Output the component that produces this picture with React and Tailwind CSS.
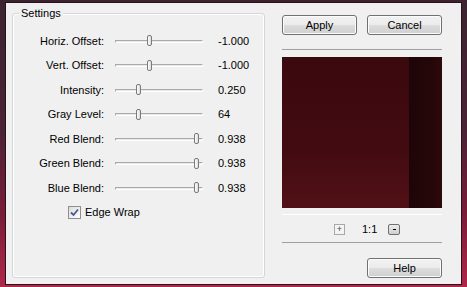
import React from "react";

const rows = [
  { label: "Horiz. Offset:", value: "-1.000", pos: 34 },
  { label: "Vert. Offset:", value: "-1.000", pos: 34 },
  { label: "Intensity:", value: "0.250", pos: 23 },
  { label: "Gray Level:", value: "64", pos: 23 },
  { label: "Red Blend:", value: "0.938", pos: 81 },
  { label: "Green Blend:", value: "0.938", pos: 81 },
  { label: "Blue Blend:", value: "0.938", pos: 81 },
];

function Slider({ pos }) {
  return (
    <div className="relative w-[88px] h-[12px] flex items-center">
      <div className="w-full h-[3px] border-t border-l border-[#a9a9a9] border-b border-b-white border-r border-r-white bg-[#e8e8e8]" />
      <div
        className="absolute top-[0px] w-[5px] h-[11px] rounded-[2px] border border-[#7a7a7a] bg-[linear-gradient(90deg,#fdfdfd,#dcdcdc)]"
        style={{ left: pos - 2 }}
      />
    </div>
  );
}

function Button({ children, className = "" }) {
  return (
    <div
      className={
        "h-[20px] w-[75px] rounded-[3px] border border-[#707070] bg-[linear-gradient(180deg,#f2f2f2_0%,#ebebeb_50%,#dddddd_51%,#cfcfcf_100%)] shadow-[inset_0_0_0_1px_#fcfcfc] flex items-center justify-center text-[11px] text-black " +
        className
      }
    >
      {children}
    </div>
  );
}

export default function App() {
  return (
    <div
      className="w-[467px] h-[287px] pl-[6px] pr-[6px] pt-[3px] pb-[3px] bg-[linear-gradient(180deg,#3b2430_0%,#4a2236_45%,#7a1c38_75%,#b0274a_100%)]"
      style={{ fontFamily: '"Liberation Sans", Arial, sans-serif' }}
    >
      <div className="w-[455px] h-[281px] bg-[#f0f0f0] flex text-[11px] text-black leading-[13px] shadow-[0_0_0_1px_#2a1018]">
        {/* Settings group */}
        <div className="relative ml-[6px] mt-[10px] w-[253px] h-[265px] rounded-[3px] border border-[#d0d8dc] shadow-[inset_0_0_0_1px_#ffffff] pt-[15px]">
          <div className="absolute left-[6px] top-[-7px] px-[2px] bg-[#f0f0f0]">
            Settings
          </div>
          {rows.map((r) => (
            <div key={r.label} className="h-[24.5px] flex items-center">
              <div className="w-[91px] text-right whitespace-nowrap">{r.label}</div>
              <div className="ml-[11px]">
                <Slider pos={r.pos} />
              </div>
              <div className="ml-[15px]">{r.value}</div>
            </div>
          ))}
          <div className="h-[24px] flex items-center pl-[55px]">
            <div className="w-[13px] h-[13px] border border-[#8e8f8f] bg-[linear-gradient(135deg,#dcdcdc,#ffffff)] flex items-center justify-center">
              <svg width="9" height="9" viewBox="0 0 9 9">
                <path d="M1 4.5 L3.5 7 L8 1.5" fill="none" stroke="#4a5c8c" strokeWidth="1.8" />
              </svg>
            </div>
            <div className="ml-[4px]">Edge Wrap</div>
          </div>
        </div>

        {/* Right column */}
        <div className="ml-[17px] w-[160px] flex flex-col">
          <div className="mt-[12px] flex gap-[10px]">
            <Button>Apply</Button>
            <Button>Cancel</Button>
          </div>
          <div className="mt-[14px] h-[1px] bg-[#a0a0a0]" />
          <div className="mt-[7px] h-[151px] flex">
            <div className="w-[127px] h-full bg-[linear-gradient(180deg,#3a090e_0%,#420b11_60%,#511016_100%)]" />
            <div className="w-[33px] h-full bg-[linear-gradient(90deg,#1e0507,#270709_80%,#2e0a0d)]" />
          </div>
          <div className="mt-[6px] h-[1px] bg-white" />
          <div className="mt-[9px] h-[11px] flex items-center">
            <div className="ml-[52px] w-[11px] h-[11px] border border-[#a8a8a8] bg-[#f4f4f4] flex items-center justify-center text-[9px] leading-[9px] text-[#444]">
              +
            </div>
            <div className="ml-[17px] w-[14px]">1:1</div>
            <div className="ml-[12px] w-[12px] h-[11px] border border-[#707070] rounded-[2px] bg-[linear-gradient(180deg,#ebebeb,#cfcfcf)] flex items-center justify-center">
              <div className="w-[3px] h-[1px] bg-black" />
            </div>
          </div>
          <div className="mt-[7px] h-[1px] bg-[#a0a0a0]" />
          <div className="mt-[15px] self-end">
            <Button>Help</Button>
          </div>
        </div>
      </div>
    </div>
  );
}
